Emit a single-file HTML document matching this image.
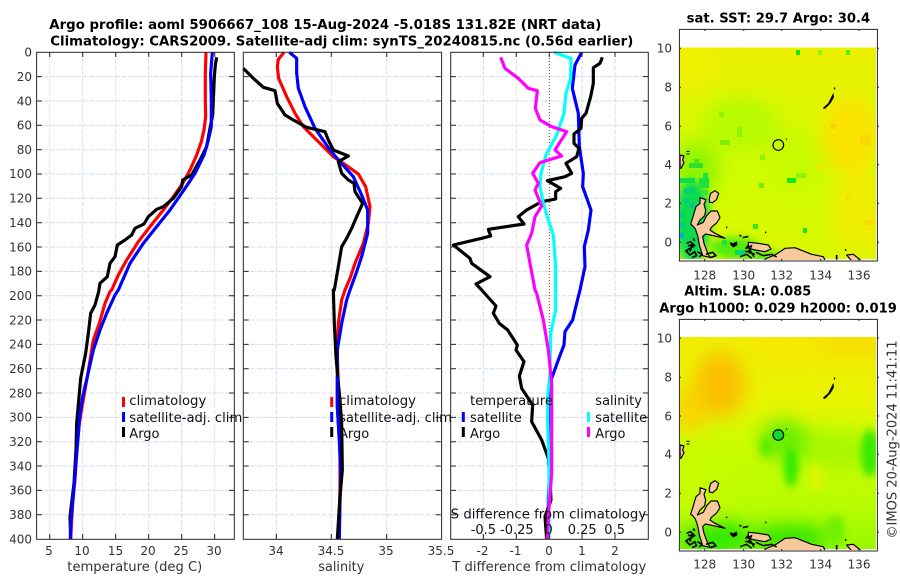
<!DOCTYPE html>
<html><head><meta charset="utf-8"><style>
html,body{margin:0;padding:0;background:#fff;width:900px;height:580px;overflow:hidden}
svg{display:block}
text{font-family:"DejaVu Sans","Liberation Sans",sans-serif}
.t{font-size:12px;fill:#333}
.l{font-size:13px;fill:#333}
.k{font-size:13px;fill:#111}
.b{font-size:13px;font-weight:bold;fill:#000}
.e{text-anchor:end}.m{text-anchor:middle}
</style></head><body>
<svg width="900" height="580" viewBox="0 0 900 580" xmlns="http://www.w3.org/2000/svg">
<defs>
<filter id="bl" filterUnits="userSpaceOnUse" x="600" y="0" width="300" height="580"><feGaussianBlur stdDeviation="9"/></filter>
<filter id="bs" filterUnits="userSpaceOnUse" x="600" y="0" width="300" height="580"><feGaussianBlur stdDeviation="4"/></filter>
<clipPath id="c1"><rect x="680" y="47.5" width="196" height="211.5"/></clipPath>
<clipPath id="c2"><rect x="680" y="337" width="196" height="212"/></clipPath>
<clipPath id="cl1"><rect x="680" y="30" width="197" height="230"/></clipPath>
<clipPath id="cl2"><rect x="680" y="320" width="197" height="230"/></clipPath>
<linearGradient id="g1" x1="0" y1="0" x2="0" y2="1"><stop offset="0" stop-color="#ecf000"/><stop offset=".3" stop-color="#dcf800"/><stop offset=".6" stop-color="#d0fc00"/><stop offset="1" stop-color="#dcf800"/></linearGradient>
<linearGradient id="g2" x1="0" y1="0" x2="0" y2="1"><stop offset="0" stop-color="#f2ec00"/><stop offset=".3" stop-color="#e8f400"/><stop offset=".5" stop-color="#ccfc00"/><stop offset=".8" stop-color="#b8fc00"/><stop offset="1" stop-color="#98f800"/></linearGradient>

<path id="hgrid" fill="none" stroke="#d4dbf5" stroke-width="1" stroke-dasharray="5 1.5" d="M37 76.6H234M37 101H234M37 125.3H234M37 149.7H234M37 174H234M37 198.3H234M37 222.7H234M37 247H234M37 271.4H234M37 295.7H234M37 320H234M37 344.4H234M37 368.7H234M37 393H234M37 417.4H234M37 441.7H234M37 466H234M37 490.4H234M37 514.7H234"/>
<path id="yt" fill="none" stroke="#262626" stroke-width="1" d="M37 76.6h5M37 101h5M37 125.3h5M37 149.7h5M37 174h5M37 198.3h5M37 222.7h5M37 247h5M37 271.4h5M37 295.7h5M37 320h5M37 344.4h5M37 368.7h5M37 393h5M37 417.4h5M37 441.7h5M37 466h5M37 490.4h5M37 514.7h5M234 76.6h-5M234 101h-5M234 125.3h-5M234 149.7h-5M234 174h-5M234 198.3h-5M234 222.7h-5M234 247h-5M234 271.4h-5M234 295.7h-5M234 320h-5M234 344.4h-5M234 368.7h-5M234 393h-5M234 417.4h-5M234 441.7h-5M234 466h-5M234 490.4h-5M234 514.7h-5"/>

<g id="land" transform="translate(680 195) scale(.33333)" stroke="#000" stroke-width="3.5" stroke-linejoin="round">
<path fill="#f8c99a" d="M60 8L78 14L72 28L77 45L74 62L60 75L52 90L70 82L80 62L93 48L112 48L120 68L110 84L94 97L90 105L105 115L135 130L100 122L77 117L68 124L72 145L82 172L90 187L68 182L58 150L53 122L46 102L38 92L32 88L40 62L48 35L60 25Z"/>
<path fill="#f8c99a" d="M88 10L92 -5L105 -13L116 -5L110 13L98 23L88 21Z"/>
<path fill="#f8c99a" d="M255 192L285 180L315 160L345 158L395 178L430 185L436 198L255 198Z"/>
<path fill="#f8c99a" d="M500 180L520 178L545 198L515 198Z"/>
<path fill="#f8c99a" d="M205 142L235 145L265 150L273 162L255 170L225 165L205 160Z"/>
<path fill="#f8c99a" d="M0 -120L12 -117L8 -105L12 -97L3 -80L0 -80Z"/>
<path fill="#000" stroke-width="1.5" d="M429 -261L445 -275L455 -295L460 -305L461 -292L450 -274L435 -259Z"/>
<path fill="#000" stroke-width="1" d="M462 -322h3v5h-3zM20 -132h8v2h-8zM20 -124h8v2h-8z"/>
<path fill="none" stroke-width="5" d="M20 145L32 140L44 152L30 160L18 168L30 180L44 170L50 182L36 188M24 152L36 150L30 170M52 170L66 178L58 186M78 178L98 172L108 182L90 188M40 130L44 138"/>
<path fill="#000" stroke-width="1" d="M150 142L160 145L170 140L172 150L160 157L152 150Z"/>
<path fill="none" stroke-width="4.5" d="M178 120L184 124M188 128L205 124M138 97h4M255 112h4M205 150L198 160L215 152L205 172L225 178M180 185L200 178L215 190M228 172L250 182L275 178L290 186M195 170L212 168L222 186"/>
<path fill="none" stroke-width="5" d="M495 165h4M470 180v14"/>
</g>
</defs>

<rect width="900" height="580" fill="#fff"/>

<!-- titles -->
<text class="b" x="49.3" y="29" textLength="552" lengthAdjust="spacingAndGlyphs">Argo profile: aoml 5906667_108 15-Aug-2024 -5.018S 131.82E (NRT data)</text>
<text class="b" x="50.3" y="45.7" textLength="583" lengthAdjust="spacingAndGlyphs">Climatology: CARS2009. Satellite-adj clim: synTS_20240815.nc (0.56d earlier)</text>
<text class="b" x="686.7" y="22.7" textLength="183.5" lengthAdjust="spacingAndGlyphs">sat. SST: 29.7 Argo: 30.4</text>
<text class="b" x="684.3" y="295.7" textLength="127" lengthAdjust="spacingAndGlyphs">Altim. SLA: 0.085</text>
<text class="b" x="659.3" y="312.3" textLength="237.5" lengthAdjust="spacingAndGlyphs">Argo h1000: 0.029 h2000: 0.019</text>

<!-- grids -->
<use href="#hgrid"/><use href="#hgrid" x="206.7"/><use href="#hgrid" x="414"/>
<g fill="none" stroke-dasharray="5 1.5">
<path stroke="#f2e0d0" d="M49.7 52V539M115.7 52V539M214.7 52V539M331.3 52V539M516.3 52V539"/>
<path stroke="#d4dbf7" d="M82.7 52V539M148.7 52V539M181.7 52V539M276.3 52V539M386.7 52V539M483.3 52V539M582 52V539M615 52V539"/>
</g>
<path fill="none" stroke="#50522c" stroke-dasharray="1 2" d="M549.3 52V400"/>

<!-- curves -->
<g transform="scale(.33333)" fill="none" stroke-width="9.5" stroke-linejoin="round" stroke-linecap="butt">
<polyline stroke="#f00" points="618,157 616,220 616,300 617,350 612,390 604,425 590,465 570,510 548,550 520,590 490,630 450,680 415,725 380,780 355,825 335,870 330,875 315,910 298,970 280,1020 262,1130 248,1210 238,1270 230,1350 225,1440 218,1510 212,1617"/>
<polyline stroke="#000" points="650,172 646,195 643,230 640,300 638,345 630,385 620,440 600,480 575,525 548,540 545,560 520,595 490,620 470,628 445,650 432,672 405,685 395,705 375,720 352,735 345,770 330,790 322,830 300,850 296,875 285,915 272,940 265,1000 257,1060 250,1095 242,1135 238,1180 230,1270 228,1350 222,1450 210,1550 212,1617"/>
<polyline stroke="#00f" points="637,157 632,220 634,300 634,380 625,420 612,465 585,520 555,565 510,630 470,680 430,730 390,790 355,870 345,885 320,940 300,990 280,1050 262,1130 248,1190 240,1240 232,1340 222,1460 212,1570 211,1617"/>

<polyline stroke="#f00" points="852,157 835,178 832,200 836,235 860,290 885,340 910,380 950,420 1000,470 1030,490 1075,522 1097,560 1110,620 1105,670 1090,730 1065,790 1050,835 1035,870 1025,900 1015,970 1012,1070 1014,1130 1018,1220 1020,1370 1020,1470 1015,1617"/>
<polyline stroke="#00f" points="868,157 890,175 890,220 895,265 915,320 945,385 990,450 1020,485 1060,530 1085,585 1103,630 1103,700 1085,770 1070,815 1050,870 1040,900 1025,970 1012,1050 1012,1130 1012,1220 1018,1320 1022,1420 1020,1510 1018,1617"/>
<polyline stroke="#000" points="730,205 760,235 790,262 825,272 832,310 855,345 880,360 920,382 975,395 985,420 1000,450 1045,468 1015,485 1025,520 1045,540 1062,550 1065,575 1088,610 1070,650 1055,685 1040,715 1025,740 1015,800 1003,870 1000,870 1003,970 1008,1070 1015,1150 1020,1200 1025,1270 1027,1410 1020,1490 1012,1617"/>
<polyline stroke="#00f" points="1012,1130 1012,1220 1018,1320"/>

<g transform="translate(1320 0)">
<polyline stroke="#00f" points="425,157 405,195 397,265 415,340 418,440 430,520 428,560 453,630 445,690 433,740 435,800 420,870 405,930 398,960 375,995 372,1035 355,1080 335,1135 325,1190 325,1320 330,1400 325,1490 325,1617"/>
<polyline stroke="#000" points="487,172 480,190 460,203 460,250 452,290 438,340 425,355 423,385 402,402 402,430 417,445 410,470 378,490 395,520 375,530 322,542 362,565 347,575 347,597 305,605 260,630 235,650 252,672 145,688 152,708 125,715 40,735 90,775 95,790 150,830 108,852 125,870 168,918 160,940 178,970 203,990 232,1035 228,1050 252,1085 238,1128 245,1165 278,1215 275,1265 305,1320 325,1375 330,1440 333,1500 315,1550 320,1617"/>
<polyline stroke="#0ff" points="342,157 393,175 392,235 378,280 372,340 350,405 318,465 303,520 300,560 310,610 325,660 340,705 347,800 347,930 332,1000 330,1120 323,1190 323,1270 327,1390 327,1617"/>
<polyline stroke="#f0f" points="182,172 195,205 235,235 265,265 292,272 286,325 300,360 335,380 380,395 345,450 365,468 300,488 278,520 295,550 285,570 305,618 285,650 275,700 260,735 270,790 285,870 290,880 310,960 325,1050 335,1150 335,1270 335,1420 325,1550 322,1617"/>
</g>
</g>

<!-- panels frames and ticks -->
<use href="#yt"/><use href="#yt" x="206.7"/><use href="#yt" x="414"/>
<g fill="none" stroke="#262626" stroke-width="1">
<rect x="36.6" y="52.3" width="197.7" height="487"/>
<rect x="243.3" y="52.3" width="198.3" height="487"/>
<rect x="450.7" y="52.3" width="197.6" height="487"/>
<path d="M49.7 539v-5M82.7 539v-5M115.7 539v-5M148.7 539v-5M181.7 539v-5M214.7 539v-5M49.7 52v5M82.7 52v5M115.7 52v5M148.7 52v5M181.7 52v5M214.7 52v5M276.3 539v-5M331.3 539v-5M386.7 539v-5M276.3 52v5M331.3 52v5M386.7 52v5M483.3 539v-5M516.3 539v-5M549.3 539v-5M582 539v-5M615 539v-5M483.3 52v5M516.3 52v5M549.3 52v5M582 52v5M615 52v5"/>
</g>

<!-- y labels -->
<g>
<text class="t e" x="32" y="56.5">0</text><text class="t e" x="32" y="81">20</text><text class="t e" x="32" y="105.3">40</text><text class="t e" x="32" y="129.7">60</text><text class="t e" x="32" y="154">80</text><text class="t e" x="32" y="178">100</text><text class="t e" x="32" y="202.6">120</text><text class="t e" x="32" y="227">140</text><text class="t e" x="32" y="251.3">160</text><text class="t e" x="32" y="275.7">180</text><text class="t e" x="32" y="300">200</text><text class="t e" x="32" y="324.4">220</text><text class="t e" x="32" y="348.7">240</text><text class="t e" x="32" y="373">260</text><text class="t e" x="32" y="397.4">280</text><text class="t e" x="32" y="421.7">300</text><text class="t e" x="32" y="446">320</text><text class="t e" x="32" y="470.4">340</text><text class="t e" x="32" y="494.7">360</text><text class="t e" x="32" y="519">380</text><text class="t e" x="32" y="543.5">400</text>
</g>

<!-- x labels -->
<text class="t m" x="49" y="555">5</text><text class="t m" x="82" y="555">10</text><text class="t m" x="115.5" y="555">15</text><text class="t m" x="148" y="555">20</text><text class="t m" x="181" y="555">25</text><text class="t m" x="214" y="555">30</text>
<text class="t m" x="276" y="555">34</text><text class="t m" x="331" y="555">34.5</text><text class="t m" x="386" y="555">35</text><text class="t m" x="441" y="555">35.5</text>
<text class="t m" x="482.5" y="555">-2</text><text class="t m" x="515.5" y="555">-1</text><text class="t m" x="549" y="555">0</text><text class="t m" x="582" y="555">1</text><text class="t m" x="615" y="555">2</text>
<text class="l" x="67.3" y="571" textLength="135" lengthAdjust="spacingAndGlyphs">temperature (deg C)</text>
<text class="l" x="318.3" y="571" textLength="46" lengthAdjust="spacingAndGlyphs">salinity</text>
<text class="l" x="452.3" y="571" textLength="194" lengthAdjust="spacingAndGlyphs">T difference from climatology</text>

<!-- legends -->
<g stroke-width="3" fill="none">
<path stroke="#f00" d="M123.5 397V407M331.7 397V407"/>
<path stroke="#00f" d="M123.5 412V422M331.7 412V422M463.3 412V422"/>
<path stroke="#000" d="M123.5 427V437M331.7 427V437M463.3 427V437"/>
<path stroke="#0ff" d="M588.5 412V422"/>
<path stroke="#f0f" d="M588.5 427V437"/>
</g>
<text class="k" x="129.3" y="405" textLength="77" lengthAdjust="spacingAndGlyphs">climatology</text>
<text class="k" x="129.3" y="422" textLength="113" lengthAdjust="spacingAndGlyphs">satellite-adj. clim</text>
<text class="k" x="129.3" y="438">Argo</text>
<text class="k" x="339" y="405" textLength="77" lengthAdjust="spacingAndGlyphs">climatology</text>
<text class="k" x="339" y="422" textLength="113" lengthAdjust="spacingAndGlyphs">satellite-adj. clim</text>
<text class="k" x="339" y="438">Argo</text>
<text class="k" x="470" y="405" textLength="83" lengthAdjust="spacingAndGlyphs">temperature</text>
<text class="k" x="470" y="422">satellite</text>
<text class="k" x="470" y="438">Argo</text>
<text class="k" x="595.3" y="405">salinity</text>
<text class="k" x="595.3" y="422">satellite</text>
<text class="k" x="595.3" y="438">Argo</text>
<text class="k" x="450.7" y="518.7" textLength="195.5" lengthAdjust="spacingAndGlyphs">S difference from climatology</text>
<text class="k" x="470.7" y="534">-0.5</text><text class="k" x="500" y="534">-0.25</text><text class="k m" x="548.7" y="534">0</text><text class="k" x="567.7" y="534">0.25</text><text class="k" x="604.3" y="534">0.5</text>

<!-- Map 1 -->
<g clip-path="url(#c1)">
<rect x="680" y="47" width="197" height="212" fill="url(#g1)"/>
<g filter="url(#bl)">
<ellipse cx="850" cy="135" rx="30" ry="40" fill="#fae400"/>
<ellipse cx="860" cy="210" rx="28" ry="40" fill="#f0ee00"/>
<ellipse cx="740" cy="125" rx="40" ry="28" fill="#b8fa00"/>
<ellipse cx="795" cy="160" rx="28" ry="30" fill="#c8fa00"/>
<ellipse cx="695" cy="170" rx="24" ry="28" fill="#90f400"/>
<ellipse cx="690" cy="65" rx="30" ry="25" fill="#eef000"/>
</g>
<g filter="url(#bs)">
<ellipse cx="692" cy="222" rx="18" ry="42" fill="#08dc50"/>
<ellipse cx="735" cy="248" rx="25" ry="11" fill="#50ec10"/>
<ellipse cx="760" cy="256" rx="20" ry="7" fill="#60ec10"/>
</g>
<g>
<rect x="680" y="178" width="15" height="5" fill="#10dc50"/><rect x="699" y="178" width="10" height="10" fill="#20e040"/>
<rect x="684" y="188" width="10" height="5" fill="#00d078"/><rect x="689" y="203" width="5" height="5" fill="#00c890"/>
<rect x="680" y="233" width="4" height="5" fill="#00b0d8"/><rect x="689" y="163" width="14" height="5" fill="#30e030"/>
<rect x="694" y="159" width="5" height="5" fill="#48e420"/><rect x="703" y="173" width="5" height="5" fill="#20e040"/>
<rect x="684" y="198" width="5" height="5" fill="#00d080"/><rect x="694" y="193" width="5" height="5" fill="#10d860"/>
<rect x="680" y="213" width="5" height="5" fill="#00d07c"/><rect x="689" y="223" width="5" height="5" fill="#10dc58"/>
<rect x="680" y="223" width="5" height="5" fill="#00cc90"/><rect x="703" y="190" width="5" height="5" fill="#38e430"/>
<rect x="796" y="50" width="4" height="5" fill="#18e410"/><rect x="846" y="50" width="4" height="5" fill="#50ec00"/>
<rect x="818" y="50" width="4" height="5" fill="#90f400"/><rect x="787" y="178" width="9" height="5" fill="#18e420"/>
<rect x="803" y="228" width="4" height="5" fill="#10e430"/><rect x="753" y="224" width="5" height="5" fill="#30e810"/>
<rect x="796" y="173" width="10" height="5" fill="#90f400"/><rect x="759" y="183" width="5" height="5" fill="#70ee00"/>
<rect x="720" y="140" width="10" height="5" fill="#80f000"/><rect x="737" y="127" width="5" height="10" fill="#90f200"/>
<rect x="719" y="112" width="5" height="5" fill="#90f200"/><rect x="760" y="155" width="5" height="5" fill="#90f200"/>
<rect x="722" y="240" width="5" height="5" fill="#20e040"/><rect x="735" y="250" width="10" height="5" fill="#10dc40"/>
<rect x="738" y="250" width="5" height="5" fill="#00d0a0"/><rect x="706" y="225" width="5" height="5" fill="#20e030"/>
<rect x="831" y="124" width="5" height="5" fill="#f8d000"/><rect x="860" y="135" width="10" height="10" fill="#f8d800"/>
<rect x="818" y="165" width="5" height="5" fill="#f6e000"/><rect x="865" y="220" width="9" height="5" fill="#f8dc00"/>
<rect x="846" y="195" width="5" height="5" fill="#f6e000"/>
</g>
</g>

<!-- Map 2 -->
<g clip-path="url(#c2)">
<rect x="680" y="337" width="197" height="212" fill="url(#g2)"/>
<g filter="url(#bl)">
<ellipse cx="720" cy="385" rx="26" ry="32" fill="#fac000"/>
<ellipse cx="690" cy="410" rx="16" ry="24" fill="#f8d400"/>
<ellipse cx="850" cy="345" rx="34" ry="12" fill="#f8dc00"/>
<ellipse cx="785" cy="348" rx="30" ry="12" fill="#f6e800"/>
<ellipse cx="825" cy="450" rx="55" ry="20" fill="#a8f800"/>
<ellipse cx="700" cy="490" rx="25" ry="30" fill="#c8fc00"/>
<ellipse cx="784" cy="440" rx="24" ry="20" fill="#68ee00"/>
<ellipse cx="790" cy="538" rx="40" ry="13" fill="#30e400"/>
<ellipse cx="715" cy="538" rx="36" ry="18" fill="#30e800"/>
</g>
<g filter="url(#bs)">
<ellipse cx="791" cy="467" rx="7" ry="20" fill="#30ea00"/>
<ellipse cx="870" cy="453" rx="9" ry="24" fill="#38ea00"/>
<ellipse cx="766" cy="447" rx="5" ry="10" fill="#50ec00"/>
<ellipse cx="816" cy="478" rx="8" ry="14" fill="#dcf800"/>
<ellipse cx="835" cy="530" rx="10" ry="15" fill="#70f000"/>
</g>
<circle cx="778.3" cy="435" r="5.2" fill="#10dc30"/>
</g>

<!-- land -->
<g clip-path="url(#cl1)"><use href="#land"/><circle cx="778.3" cy="145" r="5.3" fill="none" stroke="#000" stroke-width="1.2"/><path d="M786.5 138.5v1.5" stroke="#000"/></g>
<g clip-path="url(#cl2)"><use href="#land" y="290"/><circle cx="778.3" cy="435" r="5.3" fill="none" stroke="#000" stroke-width="1.2"/><path d="M786.5 428.5v1.5" stroke="#000"/></g>

<!-- Map frames -->
<g fill="none" stroke="#262626" stroke-width="1">
<rect x="679.4" y="29.4" width="198" height="231.6"/>
<rect x="679.4" y="319.4" width="198" height="231.6"/>
<path d="M704.7 261v-2M743.7 261v-2M781.7 261v-2M820.7 261v-2M859 261v-2M704.7 29v2M743.7 29v2M781.7 29v2M820.7 29v2M859 29v2M679 48.3h2M679 87.3h2M679 126.3h2M679 164.7h2M679 203.3h2M679 242.3h2M877 48.3h2M877 87.3h2M877 126.3h2M877 164.7h2M877 203.3h2M877 242.3h2"/>
<path d="M704.7 551v-2M743.7 551v-2M781.7 551v-2M820.7 551v-2M859 551v-2M704.7 319v2M743.7 319v2M781.7 319v2M820.7 319v2M859 319v2M679 338h2M679 377.3h2M679 416h2M679 454.3h2M679 493.3h2M679 532.3h2M877 338h2M877 377.3h2M877 416h2M877 454.3h2M877 493.3h2M877 532.3h2"/>
</g>
<g>
<text class="t e" x="672" y="52.5">10</text><text class="t e" x="672" y="91.5">8</text><text class="t e" x="672" y="130.5">6</text><text class="t e" x="672" y="169">4</text><text class="t e" x="672" y="207.5">2</text><text class="t e" x="672" y="246.5">0</text>
<text class="t e" x="672" y="342.3">10</text><text class="t e" x="672" y="381.5">8</text><text class="t e" x="672" y="420.3">6</text><text class="t e" x="672" y="458.6">4</text><text class="t e" x="672" y="497.6">2</text><text class="t e" x="672" y="536.6">0</text>
<text class="t m" x="704.7" y="279.3">128</text><text class="t m" x="743.7" y="279.3">130</text><text class="t m" x="781.7" y="279.3">132</text><text class="t m" x="820.7" y="279.3">134</text><text class="t m" x="859" y="279.3">136</text>
<text class="t m" x="704.7" y="568.7">128</text><text class="t m" x="743.7" y="568.7">130</text><text class="t m" x="781.7" y="568.7">132</text><text class="t m" x="820.7" y="568.7">134</text><text class="t m" x="859" y="568.7">136</text>
</g>
<text class="l" transform="translate(896.5 538.5) rotate(-90)" textLength="198" lengthAdjust="spacingAndGlyphs">©IMOS 20-Aug-2024 11:41:11</text>
</svg>
</body></html>
